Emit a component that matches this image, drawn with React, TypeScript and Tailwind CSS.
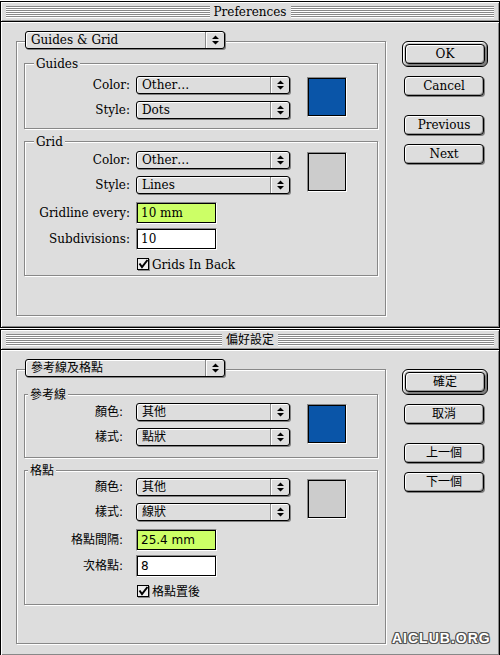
import type { ReactNode } from 'react'

const SERIF = "font-['DejaVu_Serif',serif] text-[12px]"
const SANS = "font-['DejaVu_Sans','Noto_Sans_CJK_TC',sans-serif] text-[12px]"

type Texts = {
  title: string
  panel: string
  guides: string
  grid: string
  color: string
  style: string
  other: string
  dots: string
  lines: string
  every: string
  everyValue: string
  subdiv: string
  subdivValue: string
  back: string
  ok: string
  cancel: string
  prev: string
  next: string
}

type Layout = {
  font: string
  legend: string
  labelPad: string
  guidesTop: string
  guidesH: string
  guidesFirst: string
  gridFirst: string
}

const english: Texts = {
  title: 'Preferences',
  panel: 'Guides & Grid',
  guides: 'Guides',
  grid: 'Grid',
  color: 'Color:',
  style: 'Style:',
  other: 'Other…',
  dots: 'Dots',
  lines: 'Lines',
  every: 'Gridline every:',
  everyValue: '10 mm',
  subdiv: 'Subdivisions:',
  subdivValue: '10',
  back: 'Grids In Back',
  ok: 'OK',
  cancel: 'Cancel',
  prev: 'Previous',
  next: 'Next',
}

const chinese: Texts = {
  title: '偏好設定',
  panel: '參考線及格點',
  guides: '參考線',
  grid: '格點',
  color: '顏色:',
  style: '樣式:',
  other: '其他',
  dots: '點狀',
  lines: '線狀',
  every: '格點間隔:',
  everyValue: '25.4 mm',
  subdiv: '次格點:',
  subdivValue: '8',
  back: '格點置後',
  ok: '確定',
  cancel: '取消',
  prev: '上一個',
  next: '下一個',
}

function Arrows() {
  return (
    <svg width="7" height="10" viewBox="0 0 7 10">
      <path d="M0 4h7L3.5 0.5z M0 6h7L3.5 9.5z" fill="#000" />
    </svg>
  )
}

function Popup({ width, children }: { width: string; children: ReactNode }) {
  return (
    <div
      className={`flex h-[18px] ${width} rounded-[3px] border border-black bg-[#dddddd] shadow-[1px_1px_0_#808080,inset_1px_1px_0_#fff]`}
    >
      <div className="flex flex-1 items-center whitespace-nowrap pl-[5px] leading-none">{children}</div>
      <div className="flex w-[19px] items-center justify-center border-l border-[#888] shadow-[inset_1px_0_0_#fff]">
        <Arrows />
      </div>
    </div>
  )
}

function Button({ children }: { children: ReactNode }) {
  return (
    <div className="flex h-[20px] w-[80px] items-center justify-center rounded-[4px] border border-black bg-[#dddddd] leading-none shadow-[1px_1px_0_#808080,inset_1px_1px_0_#fff,inset_-1px_-1px_0_#999]">
      {children}
    </div>
  )
}

function DefaultButton({ children }: { children: ReactNode }) {
  return (
    <div className="flex h-[26px] w-[86px] items-center justify-center rounded-[6px] border border-black bg-[#c8c8c8] shadow-[inset_1px_1px_0_#fff,inset_-1px_-1px_0_#777]">
      <Button>{children}</Button>
    </div>
  )
}

function Field({ bg, children }: { bg: string; children: ReactNode }) {
  return (
    <div className="h-[22px] w-[81px] border border-t-[#888] border-l-[#888] border-r-white border-b-white">
      <div className={`flex h-full items-center border border-black pl-[3px] leading-none ${bg}`}>{children}</div>
    </div>
  )
}

function Swatch({ fill }: { fill: string }) {
  return (
    <div className="ml-[17px] mt-[1px] h-[40px] w-[40px] border border-t-[#888] border-l-[#888] border-r-white border-b-white">
      <div className={`h-full border border-black ${fill}`} />
    </div>
  )
}

function Check() {
  return (
    <svg width="13" height="13" viewBox="0 0 13 13">
      <rect x="1" y="1" width="12" height="12" fill="#888" />
      <rect x="0.5" y="0.5" width="11" height="11" fill="#eeeeee" stroke="#000" />
      <path d="M2.5 5.5 L5 9 L10.5 2" fill="none" stroke="#000" strokeWidth="2" />
    </svg>
  )
}

function Row({ label, pad, children }: { label: string; pad: string; children: ReactNode }) {
  return (
    <div className="flex items-center">
      <span className={`w-[105px] whitespace-nowrap text-right leading-none ${pad}`}>{label}</span>
      <div className="ml-[6px]">{children}</div>
    </div>
  )
}

function Stripes() {
  return (
    <div className="h-[12px] flex-1 bg-[repeating-linear-gradient(to_bottom,#888_0px,#888_1px,#fff_1px,#fff_2px)]" />
  )
}

function Dialog({ t, l }: { t: Texts; l: Layout }) {
  return (
    <div className={`flex h-[327px] w-[500px] shrink-0 flex-col border border-black bg-[#dddddd] text-black ${l.font}`}>
      <div className="flex h-[20px] items-center border-b border-black px-[5px] shadow-[inset_1px_1px_0_#fff,inset_-1px_-1px_0_#999]">
        <Stripes />
        <span className="whitespace-nowrap px-[4px] leading-none">{t.title}</span>
        <Stripes />
      </div>

      <div className="flex flex-1 shadow-[inset_1px_1px_0_#fff,inset_-1px_-1px_0_#888]">
        {/* panel with the section popup sitting on its top edge */}
        <div className="ml-[15px] mt-[19px] flex h-[275px] w-[370px] flex-col border border-[#888] shadow-[inset_1px_1px_0_#fff,1px_1px_0_#fff]">
          <div className="-mt-[11px] ml-[8px]">
            <Popup width="w-[200px]">{t.panel}</Popup>
          </div>

          <div
            className={`ml-[7px] w-[354px] ${l.guidesTop} ${l.guidesH} border border-[#888] shadow-[inset_1px_1px_0_#fff,1px_1px_0_#fff]`}
          >
            <div className={`-mt-[7px] h-[14px] w-fit bg-[#dddddd] px-[2px] leading-[14px] ${l.legend}`}>{t.guides}</div>
            <div className={`flex ${l.guidesFirst}`}>
              <div className="flex flex-col gap-[7px]">
                <Row label={t.color} pad={l.labelPad}>
                  <Popup width="w-[154px]">{t.other}</Popup>
                </Row>
                <Row label={t.style} pad={l.labelPad}>
                  <Popup width="w-[154px]">{t.dots}</Popup>
                </Row>
              </div>
              <Swatch fill="bg-[#0a55a8]" />
            </div>
          </div>

          <div className="ml-[7px] mt-[12px] h-[135px] w-[354px] border border-[#888] shadow-[inset_1px_1px_0_#fff,1px_1px_0_#fff]">
            <div className={`-mt-[7px] h-[14px] w-fit bg-[#dddddd] px-[2px] leading-[14px] ${l.legend}`}>{t.grid}</div>
            <div className={`flex ${l.gridFirst}`}>
              <div className="flex flex-col gap-[7px]">
                <Row label={t.color} pad={l.labelPad}>
                  <Popup width="w-[154px]">{t.other}</Popup>
                </Row>
                <Row label={t.style} pad={l.labelPad}>
                  <Popup width="w-[154px]">{t.lines}</Popup>
                </Row>
              </div>
              <Swatch fill="bg-[#cccccc]" />
            </div>
            <div className="mt-[8px] flex flex-col gap-[4px]">
              <Row label={t.every} pad={l.labelPad}>
                <Field bg="bg-[#ccff66]">{t.everyValue}</Field>
              </Row>
              <Row label={t.subdiv} pad={l.labelPad}>
                <Field bg="bg-white">{t.subdivValue}</Field>
              </Row>
            </div>
            <div className="ml-[112px] mt-[8px] flex items-center gap-[2px]">
              <Check />
              <span className="leading-none">{t.back}</span>
            </div>
          </div>
        </div>

        <div className="ml-[16px] mt-[19px] flex w-[86px] flex-col">
          <DefaultButton>{t.ok}</DefaultButton>
          <div className="ml-[2px] mt-[9px]">
            <Button>{t.cancel}</Button>
          </div>
          <div className="ml-[2px] mt-[19px]">
            <Button>{t.prev}</Button>
          </div>
          <div className="ml-[2px] mt-[9px]">
            <Button>{t.next}</Button>
          </div>
        </div>
      </div>
    </div>
  )
}

export default function App() {
  return (
    <div className="relative h-[655px] w-[500px] overflow-hidden bg-white">
      <div className="flex flex-col gap-[1px] pt-[1px]">
        <Dialog
          t={english}
          l={{
            font: SERIF,
            legend: 'ml-[9px]',
            labelPad: 'pr-0',
            guidesTop: 'mt-[14px]',
            guidesH: 'h-[66px]',
            guidesFirst: 'mt-[5px]',
            gridFirst: 'mt-[2px]',
          }}
        />
        <Dialog
          t={chinese}
          l={{
            font: SANS,
            legend: 'ml-[3px]',
            labelPad: 'pr-[7px]',
            guidesTop: 'mt-[17px]',
            guidesH: 'h-[64px]',
            guidesFirst: 'mt-[1px]',
            gridFirst: 'mt-0',
          }}
        />
      </div>
      <div className="absolute left-[392px] top-[631px] font-['Liberation_Sans',sans-serif] text-[14px] font-bold leading-none tracking-[1px] text-white [text-shadow:1px_0_#555,-1px_0_#555,0_1px_#555,0_-1px_#555,1px_1px_#555,-1px_-1px_#555,1px_-1px_#555,-1px_1px_#555]">
        AICLUB.ORG
      </div>
    </div>
  )
}
